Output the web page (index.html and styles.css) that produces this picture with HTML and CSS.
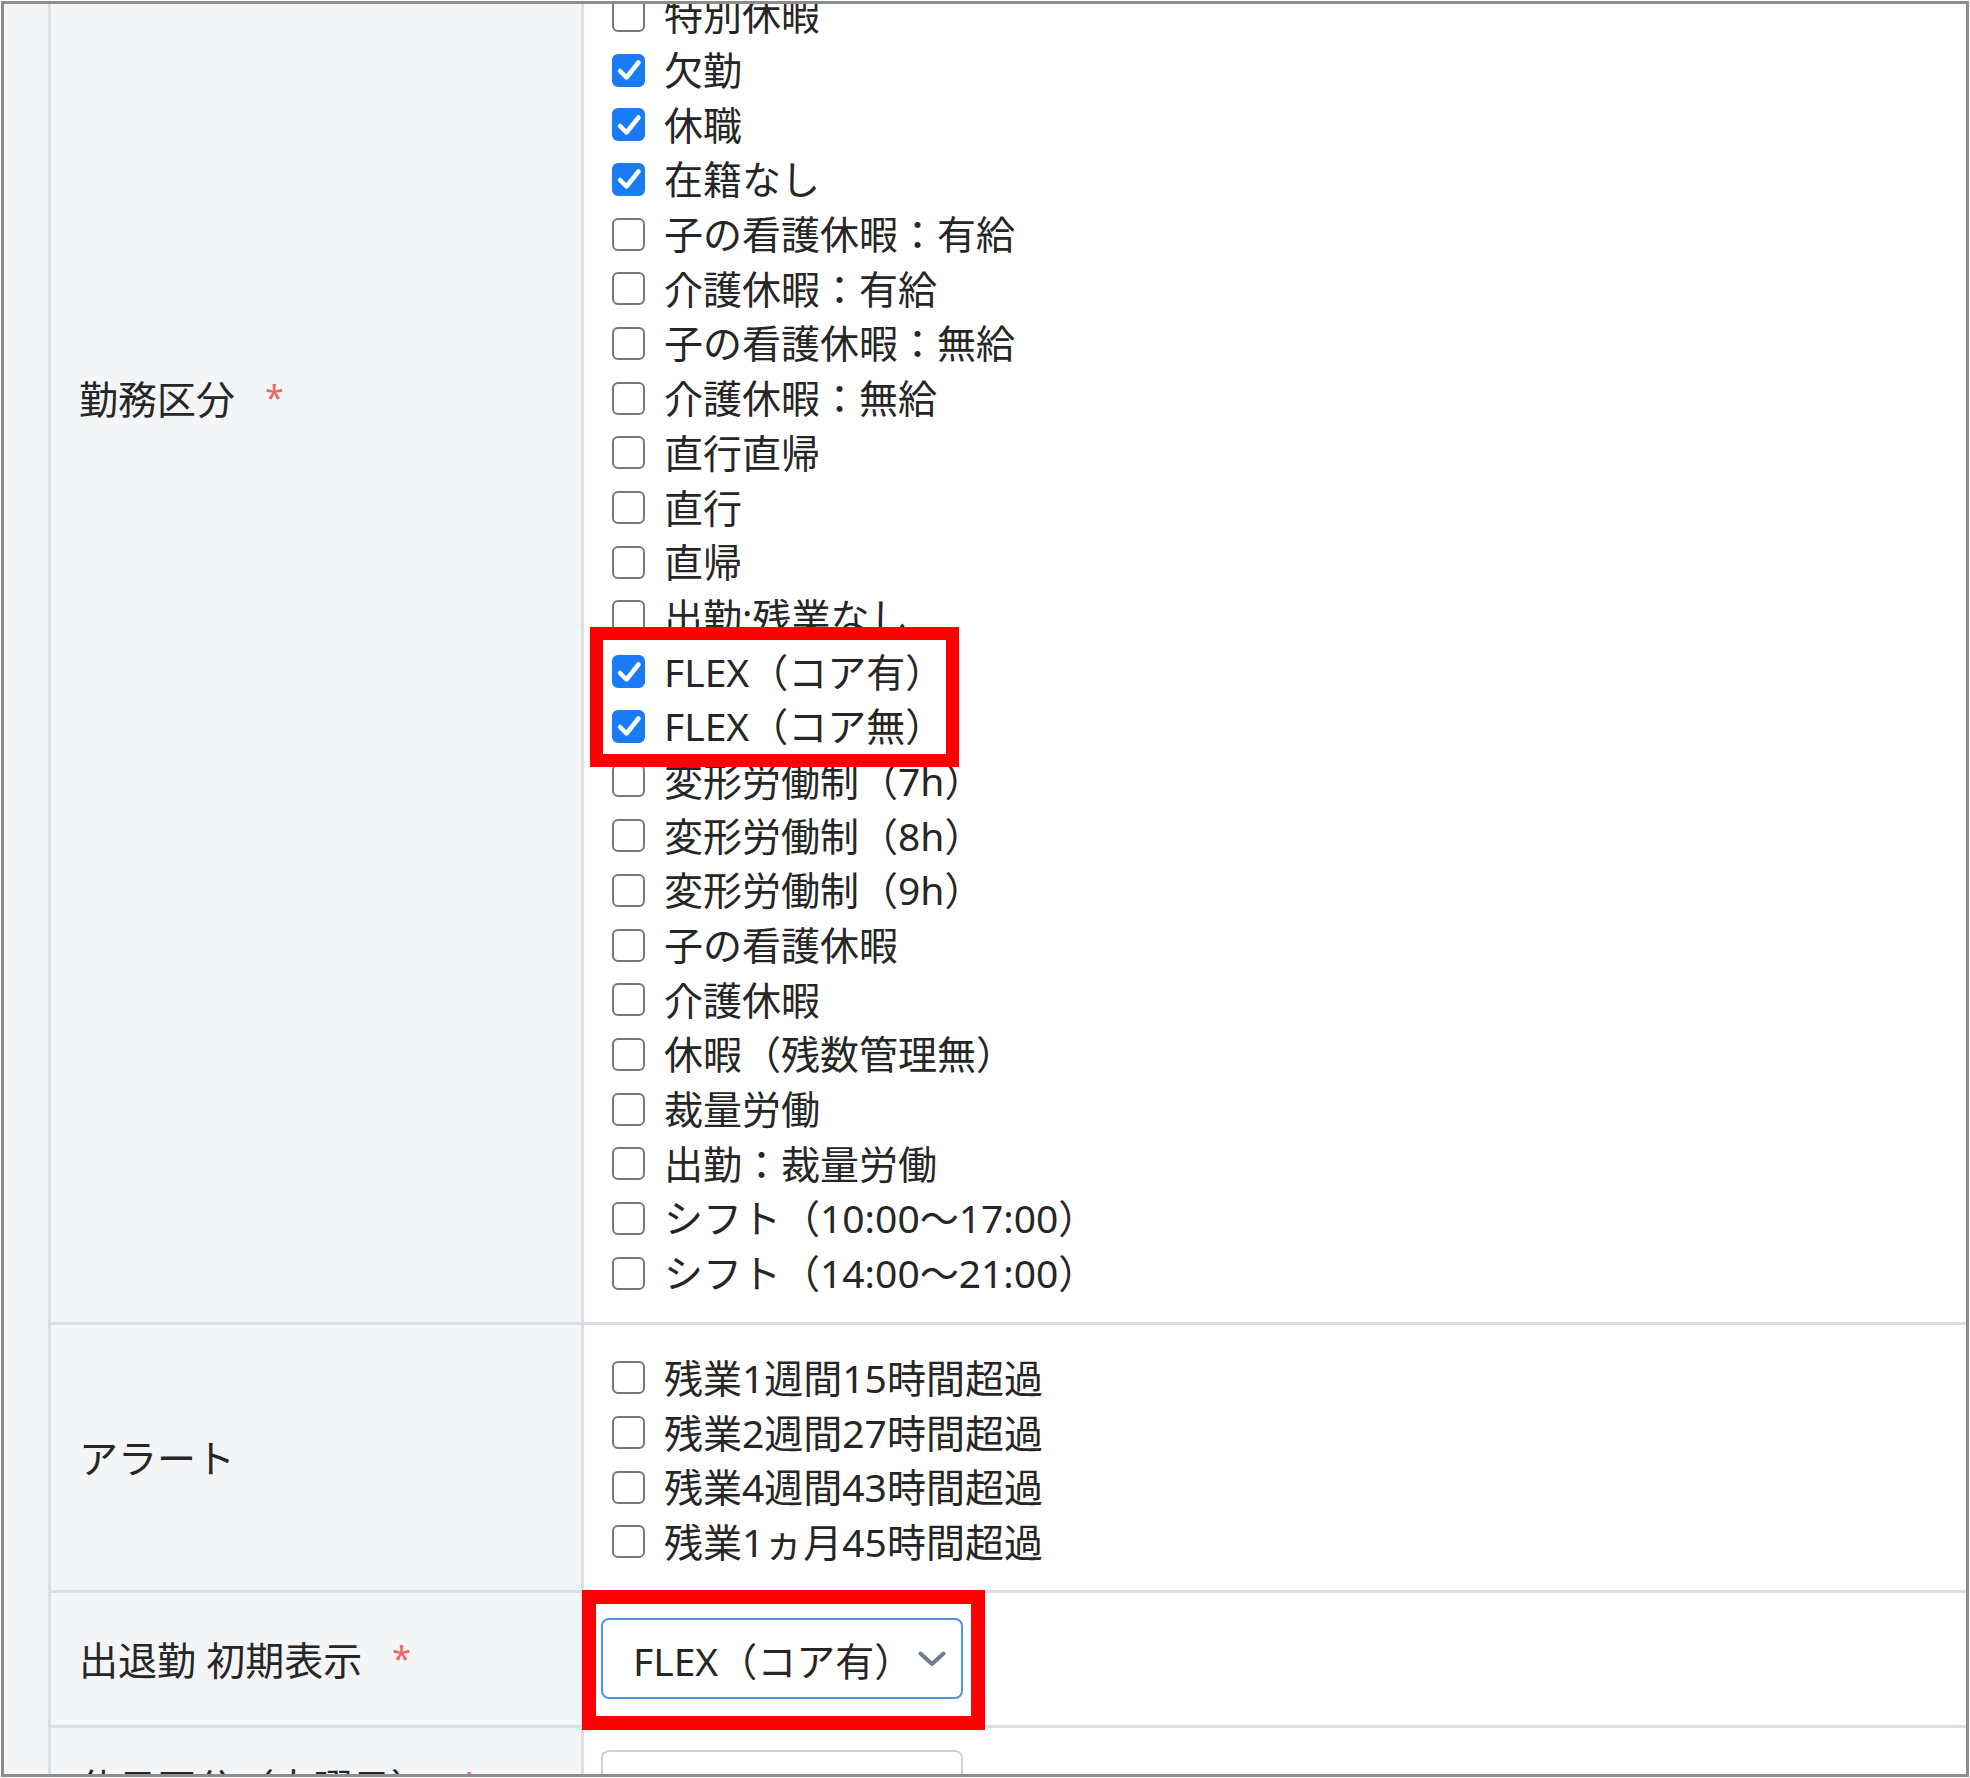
FILE: index.html
```html
<!DOCTYPE html>
<html>
<head>
    <title>勤務区分設定</title>
    <link rel="stylesheet" href="styles.css">
</head>
<body>

    <div class="frame">
        <div class="rail"></div>

        <div class="form">
            <div class="form-body">

                <!-- 勤務区分 (list is scrolled) -->
                <div class="row">
                    <div class="row-label label-top"><span>勤務区分<span class="req">*</span></span></div>
                    <div class="row-field checks">
                        <label class="check"><input type="checkbox"><span class="box"><svg viewBox="0 0 28 28"><polyline points="5,15 11.5,21.5 23.5,6.5"/></svg></span>特別休暇</label>
                        <label class="check"><input type="checkbox" checked><span class="box"><svg viewBox="0 0 28 28"><polyline points="5,15 11.5,21.5 23.5,6.5"/></svg></span>欠勤</label>
                        <label class="check"><input type="checkbox" checked><span class="box"><svg viewBox="0 0 28 28"><polyline points="5,15 11.5,21.5 23.5,6.5"/></svg></span>休職</label>
                        <label class="check"><input type="checkbox" checked><span class="box"><svg viewBox="0 0 28 28"><polyline points="5,15 11.5,21.5 23.5,6.5"/></svg></span>在籍なし</label>
                        <label class="check"><input type="checkbox"><span class="box"><svg viewBox="0 0 28 28"><polyline points="5,15 11.5,21.5 23.5,6.5"/></svg></span>子の看護休暇：有給</label>
                        <label class="check"><input type="checkbox"><span class="box"><svg viewBox="0 0 28 28"><polyline points="5,15 11.5,21.5 23.5,6.5"/></svg></span>介護休暇：有給</label>
                        <label class="check"><input type="checkbox"><span class="box"><svg viewBox="0 0 28 28"><polyline points="5,15 11.5,21.5 23.5,6.5"/></svg></span>子の看護休暇：無給</label>
                        <label class="check"><input type="checkbox"><span class="box"><svg viewBox="0 0 28 28"><polyline points="5,15 11.5,21.5 23.5,6.5"/></svg></span>介護休暇：無給</label>
                        <label class="check"><input type="checkbox"><span class="box"><svg viewBox="0 0 28 28"><polyline points="5,15 11.5,21.5 23.5,6.5"/></svg></span>直行直帰</label>
                        <label class="check"><input type="checkbox"><span class="box"><svg viewBox="0 0 28 28"><polyline points="5,15 11.5,21.5 23.5,6.5"/></svg></span>直行</label>
                        <label class="check"><input type="checkbox"><span class="box"><svg viewBox="0 0 28 28"><polyline points="5,15 11.5,21.5 23.5,6.5"/></svg></span>直帰</label>
                        <label class="check"><input type="checkbox"><span class="box"><svg viewBox="0 0 28 28"><polyline points="5,15 11.5,21.5 23.5,6.5"/></svg></span>出勤:残業なし</label>
                        <label class="check"><input type="checkbox" checked><span class="box"><svg viewBox="0 0 28 28"><polyline points="5,15 11.5,21.5 23.5,6.5"/></svg></span>FLEX（コア有）</label>
                        <label class="check"><input type="checkbox" checked><span class="box"><svg viewBox="0 0 28 28"><polyline points="5,15 11.5,21.5 23.5,6.5"/></svg></span>FLEX（コア無）</label>
                        <label class="check"><input type="checkbox"><span class="box"><svg viewBox="0 0 28 28"><polyline points="5,15 11.5,21.5 23.5,6.5"/></svg></span>変形労働制（7h）</label>
                        <label class="check"><input type="checkbox"><span class="box"><svg viewBox="0 0 28 28"><polyline points="5,15 11.5,21.5 23.5,6.5"/></svg></span>変形労働制（8h）</label>
                        <label class="check"><input type="checkbox"><span class="box"><svg viewBox="0 0 28 28"><polyline points="5,15 11.5,21.5 23.5,6.5"/></svg></span>変形労働制（9h）</label>
                        <label class="check"><input type="checkbox"><span class="box"><svg viewBox="0 0 28 28"><polyline points="5,15 11.5,21.5 23.5,6.5"/></svg></span>子の看護休暇</label>
                        <label class="check"><input type="checkbox"><span class="box"><svg viewBox="0 0 28 28"><polyline points="5,15 11.5,21.5 23.5,6.5"/></svg></span>介護休暇</label>
                        <label class="check"><input type="checkbox"><span class="box"><svg viewBox="0 0 28 28"><polyline points="5,15 11.5,21.5 23.5,6.5"/></svg></span>休暇（残数管理無）</label>
                        <label class="check"><input type="checkbox"><span class="box"><svg viewBox="0 0 28 28"><polyline points="5,15 11.5,21.5 23.5,6.5"/></svg></span>裁量労働</label>
                        <label class="check"><input type="checkbox"><span class="box"><svg viewBox="0 0 28 28"><polyline points="5,15 11.5,21.5 23.5,6.5"/></svg></span>出勤：裁量労働</label>
                        <label class="check"><input type="checkbox"><span class="box"><svg viewBox="0 0 28 28"><polyline points="5,15 11.5,21.5 23.5,6.5"/></svg></span>シフト（10:00〜17:00）</label>
                        <label class="check"><input type="checkbox"><span class="box"><svg viewBox="0 0 28 28"><polyline points="5,15 11.5,21.5 23.5,6.5"/></svg></span>シフト（14:00〜21:00）</label>
                    </div>
                </div>

                <!-- アラート -->
                <div class="row">
                    <div class="row-label"><span>アラート</span></div>
                    <div class="row-field checks alerts">
                        <label class="check"><input type="checkbox"><span class="box"><svg viewBox="0 0 28 28"><polyline points="5,15 11.5,21.5 23.5,6.5"/></svg></span>残業1週間15時間超過</label>
                        <label class="check"><input type="checkbox"><span class="box"><svg viewBox="0 0 28 28"><polyline points="5,15 11.5,21.5 23.5,6.5"/></svg></span>残業2週間27時間超過</label>
                        <label class="check"><input type="checkbox"><span class="box"><svg viewBox="0 0 28 28"><polyline points="5,15 11.5,21.5 23.5,6.5"/></svg></span>残業4週間43時間超過</label>
                        <label class="check"><input type="checkbox"><span class="box"><svg viewBox="0 0 28 28"><polyline points="5,15 11.5,21.5 23.5,6.5"/></svg></span>残業1ヵ月45時間超過</label>
                    </div>
                </div>

                <!-- 出退勤 初期表示 -->
                <div class="row">
                    <div class="row-label"><span>出退勤 初期表示<span class="req">*</span></span></div>
                    <div class="row-field select-field">
                        <div class="select focused">
                            <span>FLEX（コア有）</span>
                            <svg class="chevron" viewBox="0 0 28 16"><polyline points="2.5,2.5 14,13 25.5,2.5"/></svg>
                        </div>
                    </div>
                </div>

                <!-- next row, cut off by the window -->
                <div class="row">
                    <div class="row-label label-cut"><span>休日区分（土曜日）<span class="req">*</span></span></div>
                    <div class="row-field select-field cut">
                        <div class="select"></div>
                    </div>
                </div>

            </div>
        </div>

        <!-- annotation boxes -->
        <div class="mark mark-flex"></div>
        <div class="mark mark-select"></div>
    </div>

</body>
</html>
```

FILE: styles.css
```css
body {
    margin: 0;
    padding: 0;
    background: #fff;
    font-family: "Noto Sans", "Noto Sans CJK JP", sans-serif;
    color: #262626;
}
.frame {
    position: relative;
    display: flex;
    box-sizing: border-box;
    width: 1968px;
    height: 1776px;
    margin: 1px;
    border: 3px solid #8d8d8d;
    overflow: hidden;
}
.rail {
    width: 44px;
    flex-shrink: 0;
    background: #f4f5f7;
    border-right: 3px solid #d9dee4;
}
.form {
    flex: 1;
    background: #fff;
}
.form-body {
    margin-top: -44px;
}
.row {
    display: grid;
    grid-template-columns: 533px 1fr;
    border-bottom: 3px solid #d9dee4;
}
.row-label {
    display: flex;
    align-items: center;
    padding-left: 28px;
    background: #f4f5f7;
    border-right: 3px solid #d9dee4;
    font-size: 39px;
    line-height: 55px;
}
.label-top {
    align-items: flex-start;
    padding-top: 410px;
}
.label-cut {
    align-items: flex-start;
    padding-top: 30px;
}
.req {
    margin-left: 30px;
    color: #f06464;
    font-size: 34px;
    vertical-align: 4px;
}
.checks {
    display: flex;
    flex-direction: column;
    padding: 28px 0 21px 28px;
}
.checks.alerts {
    padding-top: 26px;
}
.check {
    display: flex;
    align-items: center;
    gap: 19px;
    height: 54.7px;
    font-size: 39px;
    line-height: 54px;
    white-space: nowrap;
}
.check input {
    display: none;
}
.box {
    display: flex;
    align-items: center;
    justify-content: center;
    box-sizing: border-box;
    width: 33px;
    height: 33px;
    flex-shrink: 0;
    background: #fff;
    border: 2.5px solid #787878;
    border-radius: 6px;
}
.box svg {
    display: none;
    width: 28px;
    height: 28px;
    fill: none;
    stroke: #fff;
    stroke-width: 4.5;
    stroke-linecap: round;
    stroke-linejoin: round;
}
.check input:checked + .box {
    background: #1a7cf4;
    border-color: #1a7cf4;
}
.check input:checked + .box svg {
    display: block;
}
.select-field {
    padding: 25px 0 26px 17px;
}
.select-field.cut {
    padding-top: 22px;
}
.select {
    display: flex;
    align-items: center;
    justify-content: space-between;
    box-sizing: border-box;
    width: 362px;
    height: 81px;
    padding: 0 15px 0 30px;
    background: #fff;
    border: 2px solid #cdd2d8;
    border-radius: 8px;
    font-size: 39px;
}
.select.focused {
    border-color: #4d94e8;
}
.chevron {
    width: 28px;
    height: 16px;
    fill: none;
    stroke: #6f7e8e;
    stroke-width: 4;
    stroke-linecap: round;
    stroke-linejoin: round;
}
.mark {
    position: absolute;
    box-sizing: border-box;
    border: 13px solid #ff0000;
    pointer-events: none;
}
.mark-flex {
    left: 586px;
    top: 623px;
    width: 369px;
    height: 140px;
}
.mark-select {
    left: 578px;
    top: 1586px;
    width: 403px;
    height: 140px;
    border-width: 14px;
}
```
